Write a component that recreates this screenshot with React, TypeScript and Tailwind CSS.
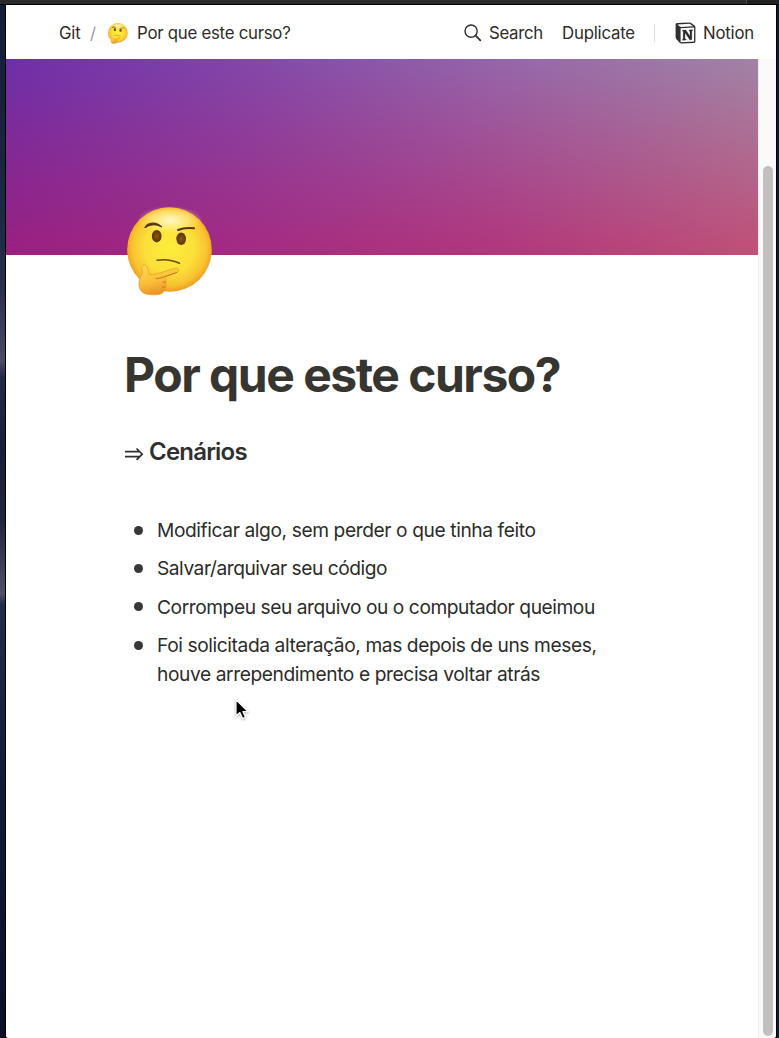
function ThinkingFace({ id, className }: { id: string; className: string }) {
  const face = `${id}-face`;
  const glow = `${id}-glow`;
  const hand = `${id}-hand`;
  const eye = `${id}-eye`;
  return (
    <svg viewBox="0 0 120 110" className={className} aria-hidden="true">
      <defs>
        <radialGradient id={face} cx="0.5" cy="0.48" r="0.53">
          <stop offset="0" stopColor="#fcee3a" />
          <stop offset="0.55" stopColor="#fbe03a" />
          <stop offset="0.82" stopColor="#f8c531" />
          <stop offset="0.93" stopColor="#f3ab27" />
          <stop offset="1" stopColor="#e78f1c" />
        </radialGradient>
        <radialGradient id={glow}>
          <stop offset="0" stopColor="#fffde8" stopOpacity="0.85" />
          <stop offset="0.6" stopColor="#fff9a8" stopOpacity="0.45" />
          <stop offset="1" stopColor="#fff47a" stopOpacity="0" />
        </radialGradient>
        <linearGradient id={hand} x1="0" y1="0" x2="0.3" y2="1">
          <stop offset="0" stopColor="#fdda4a" />
          <stop offset="0.6" stopColor="#fabf3a" />
          <stop offset="1" stopColor="#ea9525" />
        </linearGradient>
        <radialGradient id={eye}>
          <stop offset="0" stopColor="#8a5a10" />
          <stop offset="1" stopColor="#5a3204" />
        </radialGradient>
      </defs>
      <circle cx="59.5" cy="54.5" r="42.3" fill={`url(#${face})`} />
      <ellipse cx="60" cy="25" rx="33" ry="14" fill={`url(#${glow})`} />
      <ellipse cx="46.7" cy="41.2" rx="4.8" ry="6.2" fill={`url(#${eye})`} />
      <ellipse cx="71.2" cy="43.8" rx="4.8" ry="6.2" fill={`url(#${eye})`} />
      <path d="M35 32.500 C38 27.200 46 26.500 51.500 31.800 C46 28.900 40 29.200 35 32.500Z" fill="#56360a" stroke="#56360a" strokeWidth="1.300" strokeLinejoin="round" />
      <path d="M68 35 C73 33 78 32.800 84 33.300" fill="none" stroke="#56360a" strokeWidth="2" strokeLinecap="round" />
      <path d="M47 65.200 C55 64 63 65.200 69.500 68.300" fill="none" stroke="#6b4910" strokeWidth="1.500" strokeLinecap="round" />
      <path
        d="M33 70 C35.500 69.300 37.500 71 38 74 L39.300 79.500 C46 80 58 75 65.500 73.200 C69 72.700 70 76 66.800 77.600 L54.500 82 C56.500 83.500 57 85.500 55.500 87 C57 89 56.500 91 55 92 C56 95 54.500 96 53.500 96.500 C53 99 48 100 42 99.800 C34 99.500 29.500 97 29 90 C28.500 85 30.500 82 32 78.500 C32.800 75.500 30 71.500 33 70Z"
        fill={`url(#${hand})`}
        stroke="#e69b28"
        strokeWidth="0.700"
      />
      <path d="M46 83.800 C50 83.200 53.500 82.200 57 80.900 L66.800 77.400 M53 87 H55.500 M52.500 92 H55" fill="none" stroke="#c67814" strokeWidth="1" strokeLinecap="round" />
    </svg>
  );
}

function SearchIcon() {
  return (
    <svg viewBox="0 0 18 18" className="h-[18px] w-[18px] shrink-0" fill="none" stroke="#2f2f2d" strokeLinecap="round">
      <circle cx="7.100" cy="7.100" r="6.100" strokeWidth="1.400" />
      <path d="M11.700 11.700 L16.300 16.300" strokeWidth="1.800" />
    </svg>
  );
}

function NotionIcon() {
  return (
    <svg viewBox="0 0 21 22" className="ml-[20px] h-[22px] w-[21px] shrink-0" aria-hidden="true">
      <path d="M0.600 2.400 Q0.700 1.200 2 1.100 L14.300 0.500 Q15.400 0.400 16.200 1 L19.600 3.500 Q20.400 4.100 20.400 5.100 V19.400 Q20.400 20.800 19 20.900 L6.300 21.600 Q5.200 21.600 4.600 20.800 L1.300 16.900 Q0.600 16.100 0.600 15.100Z" fill="#2f2f2f" />
      <path d="M2.600 2.500 L14.500 1.700 L18.200 4.200 L6.100 4.900 Q5.300 4.900 4.700 4.500Z" fill="white" />
      <path d="M5.600 6.300 L19.100 5.500 V19.500 L5.600 20.200Z" fill="white" />
      <path d="M7.400 8.200 L10.800 8 L15 14.300 V9 L14 8.800 V7.900 L17.700 7.700 V8.500 L16.800 8.900 V17.600 L14.900 17.900 L10 10.700 V17 L11.200 17.300 V18.100 L7.300 18.300 V17.500 L8.200 17.200 V9.300 L7.400 9Z" fill="#2a2a2a" stroke="#2a2a2a" strokeWidth="0.300" />
    </svg>
  );
}

function Header() {
  return (
    <header className="flex h-[54px] shrink-0 items-center whitespace-nowrap bg-white pl-[53px] pt-[2px] text-[16.8px] text-[#2c2c2a]">
      <div className="flex w-[405px] items-center">
        <span className="w-[31px] pt-px tracking-[-0.2px]">Git</span>
        <span className="w-[17px] pt-px text-[#9b9b98]">/</span>
        <ThinkingFace id="crumb" className="-ml-[3px] h-[26px] w-[28px] shrink-0" />
        <span className="ml-[5px] pt-px tracking-[-0.250px]">Por que este curso?</span>
      </div>
      <SearchIcon />
      <span className="ml-[7px] w-[73px] pt-px tracking-[-0.300px]">Search</span>
      <span className="w-[92px] pt-px tracking-[-0.2px]">Duplicate</span>
      <span className="h-[18px] w-px bg-[#dededd]" />
      <NotionIcon />
      <span className="ml-[7px] pt-px tracking-[-0.2px]">Notion</span>
    </header>
  );
}

const items = [
  { text: ["Modificar algo, sem perder o que tinha feito"], style: "tracking-[-0.405px]" },
  { text: ["Salvar/arquivar seu código"], style: "tracking-[-0.480px]" },
  { text: ["Corrompeu seu arquivo ou o computador queimou"], style: "tracking-[-0.445px]" },
  { text: ["Foi solicitada alteração, mas depois de uns meses,", "houve arrependimento e precisa voltar atrás"], style: "tracking-[-0.410px]" },
];

function Article() {
  return (
    <article className="flex flex-col pl-[118px]">
      <ThinkingFace id="page" className="relative -ml-[14px] -mt-[60px] h-[110px] w-[120px]" />
      <h1 className="mt-[41px] h-[58px] whitespace-nowrap text-[48px] font-bold leading-[58px] tracking-[-1.500px] text-[#373530]">
        Por que este curso?
      </h1>
      <h3 className="mt-[32px] flex h-[32px] items-center whitespace-nowrap text-[24px] font-semibold leading-[32px] text-[#30302e]">
        <svg viewBox="0 0 20 14" className="mr-[5px] mt-[4px] h-[14px] w-[20px] shrink-0" fill="none" stroke="#30302e" strokeWidth="1.700" aria-label="⇒">
          <path d="M1 4.700 H15.500 M1 9.600 H15.500 M12.500 1.500 L18.200 7.150 L12.500 12.800" />
        </svg>
        <span className="tracking-[-0.800px]">Cenários</span>
      </h3>
      <ul className="mt-[48px] flex flex-col gap-[9.600px] whitespace-nowrap text-[19.2px] leading-[28.8px] text-[#2c2c2a]">
        {items.map((item) => (
          <li key={item.text[0]} className="flex">
            <span className="ml-[9.500px] mr-[14.500px] mt-[9.500px] h-[9px] w-[9px] shrink-0 rounded-full bg-[#373737]" />
            <p className={item.style}>
              {item.text.map((line) => (
                <span key={line} className="block">{line}</span>
              ))}
            </p>
          </li>
        ))}
      </ul>
    </article>
  );
}

export default function App() {
  return (
    <div className="relative flex h-[1038px] w-[779px] flex-col overflow-hidden bg-black font-['Inter','Liberation_Sans',sans-serif]">
      <div className="flex h-[5px] shrink-0 border-b border-black bg-[#2b2b2b]">
        <div className="w-[747px] border-r border-[#484848]" />
        <div className="flex-1 bg-[#202022]" />
      </div>
      <div className="flex min-h-0 flex-1">
        <div className="w-[5px] bg-[linear-gradient(180deg,#141c38_0%,#1c2942_20%,#292e49_27%,#494b64_34.500%,#252a46_36%,#191e38_43%,#22253e_50%,#505169_57%,#242c4c_58%,#131a39_75%,#0b1028_100%)]" />
        <div className="w-px bg-black" />
        <div className="flex w-[770px] flex-col overflow-hidden rounded-b-[3px] bg-white">
          <Header />
          <div className="flex min-h-0 flex-1">
            <main className="w-[753px] border-r border-[#ededed] bg-white">
              <div className="h-[196px] w-full bg-[linear-gradient(90deg,#6d30aa_0%,#8148aa_32%,#9565aa_64%,#a184a6_100%)]">
                <div className="h-full w-full bg-[linear-gradient(90deg,#9b207f_0%,#a52a80_32%,#b1357b_64%,#c04f76_100%)] [mask-image:linear-gradient(180deg,transparent_0%,black_100%)]" />
              </div>
              <Article />
            </main>
            <aside className="flex flex-1 flex-col items-center bg-[#fafafa] pt-[107px]">
              <div className="h-[870px] w-[10px] rounded-full bg-[#c1c1c1]" />
            </aside>
          </div>
        </div>
        <div className="w-px bg-black" />
        <div className="flex-1 bg-[#111a30]" />
      </div>
      <svg viewBox="0 0 18 28" className="absolute left-[234px] top-[698px] h-[24px] w-[16px] overflow-visible drop-shadow-[0_1px_1px_rgba(0,0,0,0.3)]">
        <path d="M2 2 V21 L6.500 17 L9.700 24 L13 22.600 L10 15.800 H16Z" fill="black" stroke="white" strokeWidth="1.400" strokeLinejoin="round" />
      </svg>
    </div>
  );
}
